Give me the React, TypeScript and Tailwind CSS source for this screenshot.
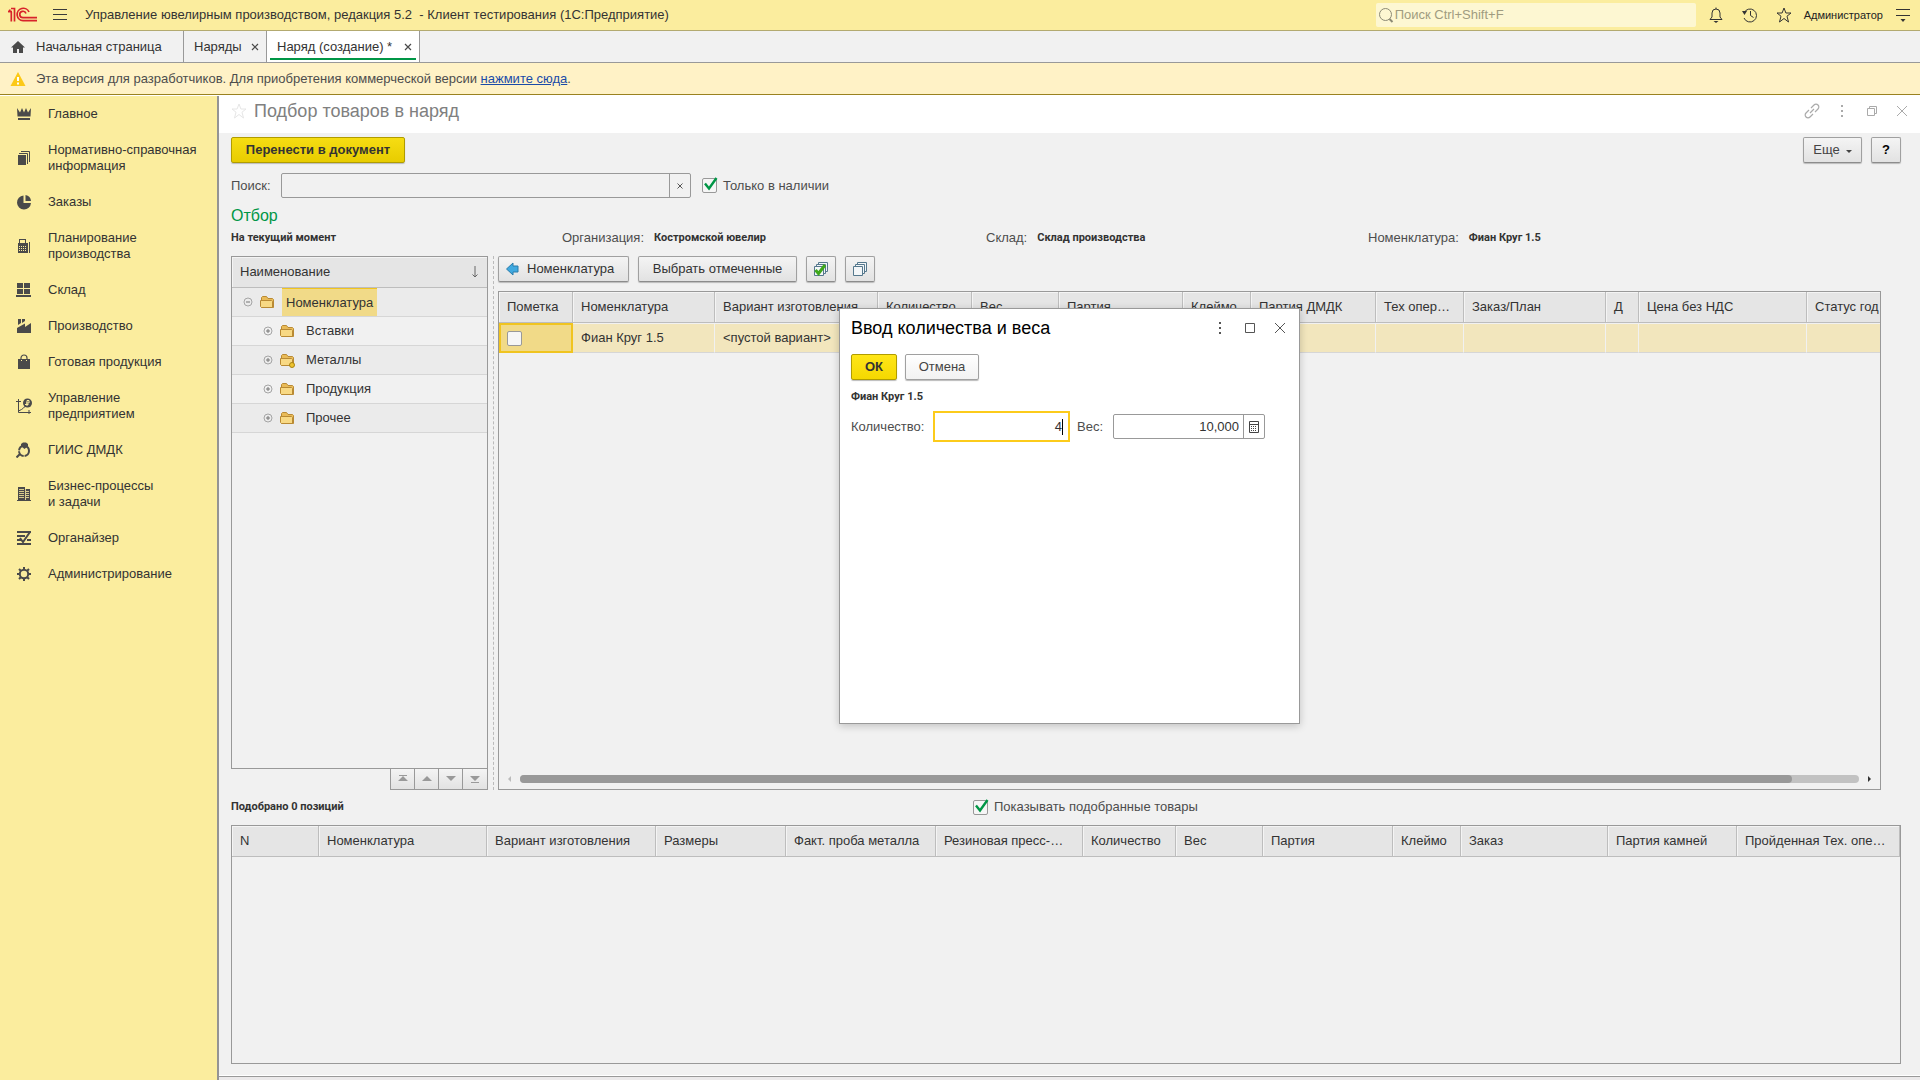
import type { ReactNode } from "react"

const Svg = ({ w = 16, h = 16, className = "", children }: { w?: number; h?: number; className?: string; children: ReactNode }) => (
  <svg width={w} height={h} viewBox={`0 0 ${w} ${h}`} fill="none" className={`shrink-0 ${className}`} aria-hidden="true">{children}</svg>
)

// ---- sidebar icons, all on a 16x16 grid ----
const CrownIcon = () => (
  <Svg><path fill="#4a4a4a" d="M1 2l3 4.500L6 2l2 4.500L10 2l2 4.500L15 2l-.5 8.500h-13zM2 12h12v2H2z" /></Svg>
)
const DocsIcon = () => (
  <Svg><path fill="#4a4a4a" d="M2 5h8v10H2z" /><path stroke="#4a4a4a" d="M3 3.500h8.500V14M5 1.500h8.500V12" /></Svg>
)
const PieIcon = () => (
  <Svg><path fill="#4a4a4a" d="M7.500 1.500A7 7 0 1 0 15 9H7.500z" /><path fill="#4a4a4a" d="M9.500 1a6.500 6.500 0 0 1 5.500 6H9.500z" /></Svg>
)
const PlanIcon = () => (
  <Svg>
    <path fill="#4a4a4a" d="M2 5h1V1h7v4h2v10H2z" />
    <path fill="#fbed9e" d="M4 2h5v3H4zM3 8h1v1H3zM5 8h1v1H5zM7 8h1v1H7zM9 8h1v1H9zM3 10h1v1H3zM5 10h1v1H5zM7 10h1v1H7zM9 10h1v1H9zM3 12h1v1H3zM5 12h1v1H5zM7 12h1v1H7zM9 12h1v1H9z" />
    <path stroke="#4a4a4a" d="M13.500 4v11" />
  </Svg>
)
const StockIcon = () => (
  <Svg><path fill="#4a4a4a" d="M1 1h6v5H1zM8 1h6v5H8zM1 7h6v5H1zM8 7h6v5H8zM0 13h15v2H0z" /></Svg>
)
const FactoryIcon = () => (
  <Svg><path fill="#4a4a4a" d="M2 1h3v4L2 7zM6 1h3v2L6 5zM1 10l8-4.500V9l6-4v10H1z" /></Svg>
)
const BagIcon = () => (
  <Svg><path fill="#4a4a4a" d="M2 5h12v10H2z" /><path stroke="#4a4a4a" strokeWidth="1.200" d="M5 6V4a3 3 0 0 1 6 0v2" /><path fill="#fbed9e" d="M5 6h1v1H5zM10 6h1v1h-1z" /></Svg>
)
const ChartIcon = () => (
  <Svg>
    <path stroke="#4a4a4a" d="M2.500 1v13.500H15M0 3.500h5M13 12v4M2.500 13l3-1.500 2-1.500 2-2" />
    <circle cx="11.500" cy="5" r="4.500" fill="#4a4a4a" />
    <path stroke="#fbed9e" d="M11 8V2.500h2V5h-3M9 6.500h3.500" />
  </Svg>
)
const RingIcon = () => (
  <Svg>
    <circle cx="8" cy="9" r="5" stroke="#4a4a4a" strokeWidth="2" strokeDasharray="7 1" />
    <path fill="#4a4a4a" d="M5 2l2-1.500h3L12 2v2L8.500 7 5 4z" />
    <path stroke="#4a4a4a" strokeWidth="2" d="M4 12l-3.500 3.500" />
  </Svg>
)
const BuildingIcon = () => (
  <Svg><path fill="#4a4a4a" d="M2 1h7v2h5v11h1v1H1v-1h1z" /><path stroke="#fbed9e" d="M3 3.500h5M3 5.500h5M3 7.500h5M3 9.500h5M3 11.500h5M10 5.500h3M10 7.500h3M10 9.500h3M10 11.500h3M9.500 3v11" strokeWidth=".8" /></Svg>
)
const OrganizerIcon = () => (
  <Svg><path fill="#4a4a4a" d="M1 1h14v2H1zM1 5h8v2H1zM1 9h4v2H1zM11 9h4v2h-4zM1 13h14v2H1z" /><path stroke="#4a4a4a" strokeWidth="2" d="M4 8l3 4 7-10" /></Svg>
)
const GearIcon = () => (
  <Svg>
    <circle cx="8" cy="8" r="4.200" stroke="#4a4a4a" strokeWidth="2" />
    <path stroke="#4a4a4a" strokeWidth="2" d="M8 1v2.500M8 12.500V15M1 8h2.500M12.500 8H15M3 3l1.800 1.800M11.200 11.200L13 13M13 3l-1.800 1.800M4.800 11.200L3 13" />
  </Svg>
)

const menu = [
  { text: "Главное", icon: <CrownIcon /> },
  { text: "Нормативно-справочная информация", icon: <DocsIcon /> },
  { text: "Заказы", icon: <PieIcon /> },
  { text: "Планирование\nпроизводства", icon: <PlanIcon /> },
  { text: "Склад", icon: <StockIcon /> },
  { text: "Производство", icon: <FactoryIcon /> },
  { text: "Готовая продукция", icon: <BagIcon /> },
  { text: "Управление\nпредприятием", icon: <ChartIcon /> },
  { text: "ГИИС ДМДК", icon: <RingIcon /> },
  { text: "Бизнес-процессы\nи задачи", icon: <BuildingIcon /> },
  { text: "Органайзер", icon: <OrganizerIcon /> },
  { text: "Администрирование", icon: <GearIcon /> },
]

const filters = [
  { label: "", value: "На текущий момент" },
  { label: "Организация:", value: "Костромской ювелир" },
  { label: "Склад:", value: "Склад производства" },
  { label: "Номенклатура:", value: "Фиан Круг 1.5" },
]

const tree = [
  { text: "Вставки" },
  { text: "Металлы", badge: true },
  { text: "Продукция" },
  { text: "Прочее" },
]

const goodsCols = [
  { text: "Пометка", w: 74 },
  { text: "Номенклатура", w: 142 },
  { text: "Вариант изготовления", w: 163 },
  { text: "Количество", w: 94 },
  { text: "Вес", w: 87 },
  { text: "Партия", w: 124 },
  { text: "Клеймо", w: 68 },
  { text: "Партия ДМДК", w: 125 },
  { text: "Тех опер…", w: 88 },
  { text: "Заказ/План", w: 142 },
  { text: "Д", w: 33 },
  { text: "Цена без НДС", w: 168 },
  { text: "Статус год", w: 132 },
]

const pickedCols = [
  { text: "N", w: 87 },
  { text: "Номенклатура", w: 168 },
  { text: "Вариант изготовления", w: 169 },
  { text: "Размеры", w: 130 },
  { text: "Факт. проба металла", w: 150 },
  { text: "Резиновая пресс-…", w: 147 },
  { text: "Количество", w: 93 },
  { text: "Вес", w: 87 },
  { text: "Партия", w: 130 },
  { text: "Клеймо", w: 68 },
  { text: "Заказ", w: 147 },
  { text: "Партия камней", w: 129 },
  { text: "Пройденная Тех. опе…", w: 163 },
]

const grayBtn = "flex items-center h-[26px] rounded-xs border border-[#a0a0a0] border-b-[#8c8c8c] bg-linear-to-b from-[#f4f4f4] to-[#e2e2e2] shadow-[0_1px_1px_#bbbbbb]"
const yellowBtn = "flex items-center justify-center h-[26px] rounded-xs border border-[#b09c00] bg-linear-to-b font-bold text-[#333333] shadow-[0_1px_1px_#bbbbbb]"
const thCls = "h-[31px] px-2 text-left font-normal whitespace-nowrap overflow-hidden bg-[#e5e5e5] border-r border-b border-[#bdbdbd] shadow-[inset_1px_1px_0_#f4f4f4]"
const smallBold = "font-[Roboto,sans-serif] text-[11px] font-bold text-[#333333]"

const Star = ({ color }: { color: string }) => (
  <Svg><path stroke={color} d="M8 1l1.900 5H15l-4 3.200L12.500 15 8 11.500 3.500 15 5 9.200 1 6h5.100z" /></Svg>
)

const Dots = ({ color }: { color: string }) => (
  <Svg><path fill={color} d="M7 2h2v2H7zM7 7h2v2H7zM7 12h2v2H7z" /></Svg>
)

const Cross = ({ color }: { color: string }) => (
  <Svg><path stroke={color} d="M3 3l10 10M13 3L3 13" /></Svg>
)

const TabCross = () => (
  <Svg w={8} h={8}><path stroke="#4a4a4a" strokeWidth="1.200" d="M1 1l6 6M7 1L1 7" /></Svg>
)

const Folder = ({ badge }: { badge?: boolean }) => (
  <Svg>
    <path fill="#e9bb58" stroke="#b98a34" strokeLinejoin="round" d="M2.500 6V3.500l1-1h4l1.500 2h4.500l1 1v8h-12z" />
    <path fill="#f8d984" stroke="#b98a34" strokeLinejoin="round" d="M1.500 6.500h11l1 1v6h-11l-1-1z" />
    {badge && <circle cx="13" cy="13" r="2.500" fill="#efc42f" stroke="#a98412" />}
  </Svg>
)

const Toggle = ({ open }: { open?: boolean }) => (
  <Svg w={10} h={10}>
    <circle cx="5" cy="5" r="4" stroke="#a5a5a5" />
    <path stroke="#777777" d={open ? "M3 5h4" : "M3 5h4M5 3v4"} />
  </Svg>
)

const SheetsIcon = ({ checked }: { checked?: boolean }) => (
  <Svg>
    <path fill="#f3f6f8" stroke="#55788d" d="M5.500 1.500h9v9h-9z" />
    <path fill="#f3f6f8" stroke="#55788d" d="M3.500 3.500h9v9h-9z" />
    <path fill="#f3f6f8" stroke="#55788d" d="M1.500 5.500h9v9h-9z" />
    {checked && <path stroke="#3fa81c" strokeWidth="3" d="M2.500 9l3 3.500 6.500-8.500" />}
  </Svg>
)

const Check = ({ id, label }: { id: string; label: string }) => (
  <div className="flex items-center gap-[6px]">
    <span className="relative flex">
      <input id={id} type="checkbox" defaultChecked className="peer appearance-none size-[15px] rounded-xs border border-[#999999] bg-[#f6f6f6]" />
      <Svg w={18} h={18} className="absolute -top-1 left-0 pointer-events-none hidden peer-checked:block">
        <path stroke="#009646" strokeWidth="2.400" d="M3 9.500l4 5L14.500 4" />
      </Svg>
    </span>
    <label htmlFor={id}>{label}</label>
  </div>
)

const TopBar = () => (
  <header className="flex items-center h-[31px] pl-2 pr-[9px] bg-[#fbed9e] border-b border-[#b3aa70]">
    <Svg w={30} h={16}>
      <path stroke="#d8232a" strokeWidth="1.700" d="M0 4.500h1.800V2.500M3.300 5v9.500M3 1.500h3.500v13M21 5A6.200 6.200 0 1 0 15 13.700h14M18 6.500a3.200 3.200 0 1 0-3 4.200h14" />
      <path stroke="#d8232a" strokeWidth="1.500" d="M0 4.500h4" />
    </Svg>
    <button aria-label="Меню" className="ml-[14px]">
      <Svg><path stroke="#3a3a3a" d="M1 2.500h14M1 7.500h14M1 12.500h14" /></Svg>
    </button>
    <h1 className="ml-[17px] whitespace-pre">Управление ювелирным производством, редакция 5.2  - Клиент тестирования (1С:Предприятие)</h1>
    <div className="ml-auto flex items-center w-[320px] h-6 px-[2px] rounded-xs bg-[#fdf7d2]">
      <Svg><circle cx="7.500" cy="7.500" r="6" stroke="#8c8a75" /><path stroke="#8c8a75" strokeWidth="2" d="M11.500 12l3 3" /></Svg>
      <input aria-label="Поиск" placeholder="Поиск Ctrl+Shift+F" className="flex-1 pl-px bg-transparent outline-none placeholder:text-[#a09c80]" />
    </div>
    <div className="ml-3 flex items-center gap-[18px]">
      <button aria-label="Уведомления">
        <Svg><path stroke="#333333" d="M2 12.500h12L12 10V6a4 4 0 0 0-8 0v4zM8 .5V2" /><path fill="#333333" d="M5.500 14h5L8 16z" /></Svg>
      </button>
      <button aria-label="История">
        <Svg><path stroke="#333333" d="M2 6a6.500 6.500 0 1 1 0 5M8.500 4v4.500l3 2" /><path fill="#333333" d="M0 4h5L2.500 8z" /></Svg>
      </button>
      <button aria-label="Избранное"><Star color="#333333" /></button>
    </div>
    <span className="ml-3 text-[11px] text-[#222222]">Администратор</span>
    <button aria-label="Настройки" className="ml-3">
      <Svg><path stroke="#333333" d="M1 2.500h14M1 8.500h14" /><path fill="#333333" d="M5.500 12h5L8 15z" /></Svg>
    </button>
  </header>
)

const Tabs = () => (
  <nav className="flex h-8 bg-[#f1f1f1] border-b border-[#999999]">
    <a href="#" className="flex items-center w-[184px] pl-[10px] gap-[10px] border-r border-[#999999]">
      <Svg><path fill="#4a4a4a" d="M8 2L1 8.500h2V14h4v-4h2v4h4V8.500h2z" /></Svg>
      Начальная страница
    </a>
    <a href="#" className="flex items-center justify-between w-[83px] pl-[10px] pr-[7px] border-r border-[#999999]">Наряды <TabCross /></a>
    <a href="#" className="relative flex items-center justify-between w-[153px] pl-[10px] pr-[7px] bg-white border-r border-[#999999]">
      Наряд (создание) * <TabCross />
      <span className="absolute left-[3px] right-[3px] bottom-[2px] h-[2px] bg-[#009646]"></span>
    </a>
  </nav>
)

const Sidebar = () => (
  <nav className="w-[219px] shrink-0 bg-[#fbed9e] border-r-2 border-[#949494]">
    <ul>
      {menu.map((item) => (
        <li key={item.text}>
          <a href="#" className="flex items-center gap-4 py-[10px] pl-4 pr-2 leading-4 whitespace-pre-line">{item.icon}{item.text}</a>
        </li>
      ))}
    </ul>
  </nav>
)

const Tree = () => (
  <div className="flex flex-col w-[257px] shrink-0">
    <div className="flex-1 border border-[#999999]">
      <div className="flex items-center justify-between h-[31px] px-2 bg-[#e5e5e5] border-b border-[#bdbdbd] shadow-[inset_1px_1px_0_#f4f4f4]">
        Наименование
        <Svg w={8} h={12}><path stroke="#666666" d="M4 0v11M1.500 8.500L4 11l2.500-2.500" /></Svg>
      </div>
      <ul>
        <li className="flex items-center h-[29px] pl-[11px] bg-[#ebebeb] border-b border-[#d6d6d6]">
          <Toggle open />
          <span className="ml-[6px]"><Folder /></span>
          <span className="flex items-center h-7 ml-[7px] px-1 bg-[#f1da88] border-t border-[#f0c420]">Номенклатура</span>
        </li>
        {tree.map((n) => (
          <li key={n.text} className="flex items-center h-[29px] pl-[31px] border-b border-[#d6d6d6] odd:bg-[#ebebeb] even:bg-[#f1f1f1]">
            <Toggle />
            <span className="ml-[6px] mr-[11px]"><Folder badge={n.badge} /></span>
            {n.text}
          </li>
        ))}
      </ul>
    </div>
    <div className="flex self-end h-[21px] border-x border-b border-[#999999] divide-x divide-[#999999] bg-linear-to-b from-[#f4f4f4] to-[#e2e2e2]">
      {["M8 5l5 5H3zM4 4h8v1H4z", "M8 5l5 5H3z", "M8 10l5-5H3z", "M8 10l5-5H3zM4 11h8v1H4z"].map((d) => (
        <button key={d} aria-label="Прокрутка" className="flex items-center justify-center w-6">
          <Svg><path fill="#999999" d={d} /></Svg>
        </button>
      ))}
    </div>
  </div>
)

const Goods = () => (
  <div className="flex flex-1 flex-col min-w-0">
    <div className="flex gap-[9px] mb-[9px]">
      <button className={`${grayBtn} w-[131px] pl-[6px] gap-[6px]`}>
        <Svg><path fill="#3fa9e0" stroke="#2b7cab" d="M1.500 8L8 2v3h5v6H8v3z" /></Svg>
        Номенклатура
      </button>
      <button className={`${grayBtn} justify-center w-[159px]`}>Выбрать отмеченные</button>
      <button aria-label="Отметить все" className={`${grayBtn} justify-center w-[30px]`}><SheetsIcon checked /></button>
      <button aria-label="Снять отметки" className={`${grayBtn} justify-center w-[30px]`}><SheetsIcon /></button>
    </div>
    <div className="flex flex-1 flex-col border border-[#999999] overflow-hidden">
      <table className="w-[1440px] table-fixed border-separate border-spacing-0">
        <colgroup>{goodsCols.map((c) => <col key={c.text} style={{ width: c.w }} />)}</colgroup>
        <thead>
          <tr>{goodsCols.map((c) => <th key={c.text} className={thCls}>{c.text}</th>)}</tr>
        </thead>
        <tbody>
          <tr className="bg-[#f2e6bd]">
            {goodsCols.map((c, i) => (
              <td key={c.text} className={i === 0 ? "h-[30px] px-[6px] bg-[#f1da88] border-2 border-[#f0c420]" : "h-[30px] px-2 whitespace-nowrap border-r border-y border-r-[#f1f1f1] border-t-[#f1f1f1] border-b-[#d6d6d6]"}>
                {i === 0 && <input type="checkbox" aria-label="Пометка" className="block appearance-none size-[15px] rounded-xs border border-[#999999] bg-[#f6f6f6]" />}
                {i === 1 && "Фиан Круг 1.5"}
                {i === 2 && "<пустой вариант>"}
              </td>
            ))}
          </tr>
        </tbody>
      </table>
      <div className="flex items-center gap-2 mt-auto px-2 pb-[6px]">
        <Svg w={5} h={8}><path fill="#bbbbbb" d="M4 1v6L1 4z" /></Svg>
        <div className="flex-1 h-2 rounded-full bg-[#c2c2c2]"><div className="w-[95%] h-2 rounded-full bg-[#999999]"></div></div>
        <Svg w={5} h={8}><path fill="#333333" d="M1 1v6l3-3z" /></Svg>
      </div>
    </div>
  </div>
)

const Dialog = () => (
  <div role="dialog" aria-labelledby="dlg" className="absolute left-[839px] top-[308px] w-[461px] h-[416px] pl-[11px] bg-white border border-[#999999] shadow-[0_2px_8px_#00000033]">
    <div className="flex items-center h-[38px] pr-[11px] text-black">
      <h2 id="dlg" className="flex-1 text-[18px]">Ввод количества и веса</h2>
      <div className="flex gap-[14px]">
        <button aria-label="Ещё"><Dots color="#555555" /></button>
        <button aria-label="Развернуть"><Svg><path stroke="#555555" d="M3.500 3.500h9v9h-9z" /></Svg></button>
        <button aria-label="Закрыть"><Cross color="#555555" /></button>
      </div>
    </div>
    <div className="flex gap-2 mt-[7px]">
      <button className={`${yellowBtn} w-[46px] from-[#ffe617] to-[#f5d800]`}>ОК</button>
      <button className="flex items-center justify-center w-[74px] h-[26px] rounded-xs border border-[#a0a0a0] bg-linear-to-b from-white to-[#f2f2f2] text-[#444444] shadow-[0_1px_1px_#bbbbbb]">Отмена</button>
    </div>
    <p className={`${smallBold} mt-[9px] leading-4`}>Фиан Круг 1.5</p>
    <div className="flex items-center mt-[6px]">
      <label htmlFor="qty" className="w-[82px] text-[#4d4d4d]">Количество:</label>
      <div className="flex items-center w-[137px] h-[31px] pr-[5px] border-2 border-[#fccb1b]">
        <input id="qty" defaultValue="4" className="w-full text-right outline-none" />
        <span className="w-px h-4 bg-black"></span>
      </div>
      <label htmlFor="weight" className="w-[36px] ml-[7px] text-[#4d4d4d]">Вес:</label>
      <div className="flex w-[152px] h-[25px] rounded-xs border border-[#999999]">
        <input id="weight" defaultValue="10,000" className="flex-1 min-w-0 pr-1 text-right outline-none" />
        <button aria-label="Калькулятор" className="flex items-center justify-center w-[21px] border-l border-[#999999]">
          <Svg w={10} h={12}>
            <path stroke="#444444" d="M.5 .5h9v11h-9zM1 3.500h8" />
            <path fill="#444444" d="M2 5h1v1H2zM4 5h1v1H4zM6 5h1v1H6zM2 7h1v1H2zM4 7h1v1H4zM6 7h1v1H6zM2 9h1v1H2zM4 9h1v1H4zM6 9h1v1H6z" />
          </Svg>
        </button>
      </div>
    </div>
  </div>
)

const App = () => {
  return (
    <div className="relative flex flex-col min-h-screen overflow-hidden bg-white font-['Liberation_Sans',Arial,sans-serif] text-[13px] leading-4 text-[#333333]">
      <TopBar />
      <Tabs />
      <p className="flex items-center h-8 pl-[10px] bg-[#fff2c6] border-b border-[#9a8220] text-[#4d4d4d]">
        <Svg className="mr-[10px]"><path fill="#fcc917" d="M8 1l7.500 14H.5z" /><path fill="#ffffff" d="M7 6h2v4H7zM7 11.500h2v2H7z" /></Svg>
        <span>Эта версия для разработчиков. Для приобретения коммерческой версии <a href="#" className="text-[#1a4ba8] underline">нажмите сюда</a>.</span>
      </p>
      <div className="flex flex-1 mt-px">
        <Sidebar />
        <div className="flex flex-1 flex-col min-w-0">
          <div className="flex items-center h-[37px] pl-3 pr-[10px] pb-[7px]">
            <button aria-label="В избранное"><Star color="#e6e6e6" /></button>
            <h2 className="ml-[7px] flex-1 text-[18px] text-[#808080]">Подбор товаров в наряд</h2>
            <div className="flex gap-[14px]">
              <button aria-label="Ссылка">
                <Svg><path stroke="#aaaaaa" strokeWidth="1.200" d="M7 5l3-3a2.800 2.800 0 0 1 4 4l-3 3M9 11l-3 3a2.800 2.800 0 0 1-4-4l3-3M6 10l4-4" /></Svg>
              </button>
              <button aria-label="Ещё"><Dots color="#aaaaaa" /></button>
              <button aria-label="Восстановить"><Svg><path stroke="#aaaaaa" d="M3.500 5.500h7v7h-7zM5.500 5V3.500h7v7H11" /></Svg></button>
              <button aria-label="Закрыть"><Cross color="#aaaaaa" /></button>
            </div>
          </div>

          <main className="flex flex-1 flex-col pt-1 pb-[11px] pl-3 pr-[19px] bg-[#f1f1f1]">
            <div className="flex gap-[9px]">
              <button className={`${yellowBtn} w-[174px] mr-auto from-[#f6dd12] to-[#e8cc00]`}>Перенести в документ</button>
              <button className={`${grayBtn} justify-center w-[59px] gap-[6px] text-[#444444]`}>
                Еще
                <Svg w={6} h={4} className="mt-1"><path fill="#444444" d="M0 0h6L3 3z" /></Svg>
              </button>
              <button className={`${grayBtn} justify-center w-[30px] font-bold text-black`}>?</button>
            </div>

            <div className="flex items-center mt-[10px] text-[#4d4d4d]">
              <label htmlFor="search" className="w-[50px]">Поиск:</label>
              <div className="flex w-[410px] h-[25px] mr-[11px] rounded-xs border border-[#999999]">
                <input id="search" className="flex-1 px-1 outline-none" />
                <button aria-label="Очистить" className="flex items-center justify-center w-[21px] border-l border-[#999999]">
                  <Svg w={6} h={6}><path stroke="#555555" d="M.5 .5l5 5M5.500 .5l-5 5" /></Svg>
                </button>
              </div>
              <Check id="stock" label="Только в наличии" />
            </div>

            <h3 className="mt-2 text-[16px] leading-5 text-[#009646]">Отбор</h3>
            <div className="grid grid-cols-[331fr_424fr_382fr_533fr] mt-1 mb-[10px]">
              {filters.map((f) => (
                <p key={f.value} className="flex items-center h-4 gap-[10px] text-[#4d4d4d]">
                  {f.label && <span>{f.label}</span>}
                  <b className={smallBold}>{f.value}</b>
                </p>
              ))}
            </div>

            <div className="flex flex-[535] mr-[20px]">
              <Tree />
              <div className="w-px ml-[5px] mr-1 border-l border-dashed border-[#bbbbbb]"></div>
              <Goods />
            </div>

            <div className="grid grid-cols-[742fr_928fr] items-center h-[35px] text-[#4d4d4d]">
              <b className={smallBold}>Подобрано 0 позиций</b>
              <Check id="picked" label="Показывать подобранные товары" />
            </div>

            <div className="flex-[238] border border-[#999999] overflow-hidden">
              <table className="w-full table-fixed border-separate border-spacing-0">
                <colgroup>{pickedCols.map((c) => <col key={c.text} style={{ width: c.w }} />)}</colgroup>
                <thead>
                  <tr>{pickedCols.map((c) => <th key={c.text} className={thCls}>{c.text}</th>)}</tr>
                </thead>
              </table>
            </div>
          </main>
          <div className="h-1 mt-px bg-[#ebe9ea] border-t border-[#999999]"></div>
        </div>
      </div>
      <Dialog />
    </div>
  )
}

export default App
